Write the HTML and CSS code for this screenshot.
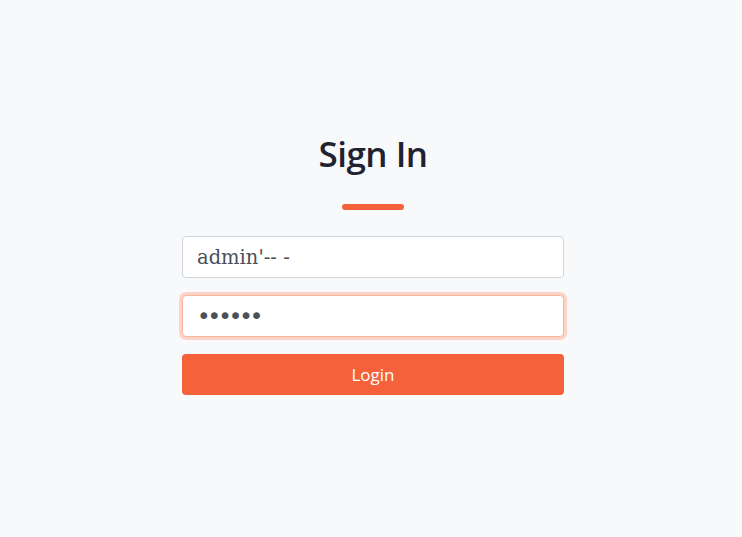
FILE: index.html
```html
<!DOCTYPE html>
<html lang="en">
<head>
<meta charset="utf-8">
<title>Sign In</title>
<link rel="stylesheet" href="styles.css">
</head>
<body>
<main class="page">
  <section class="card">
    <h1 class="title">Sign In</h1>
    <div class="underline"></div>
    <form class="form">
      <input class="field" type="text" value="admin'-- -">
      <input class="field field-focus" type="password" value="secret">
      <button class="btn" type="button">Login</button>
    </form>
  </section>
</main>
</body>
</html>
```
FILE: styles.css
```css
* { box-sizing: border-box; }
html, body { margin: 0; padding: 0; }
body {
  background: #f8f9fa;
  font-family: "Open Sans", "Noto Sans", sans-serif;
  color: #212529;
}
.page {
  min-height: 100vh;
  display: flex;
  align-items: center;
  justify-content: center;
}
.card {
  width: 382px;
  display: flex;
  flex-direction: column;
  align-items: center;
  margin-left: 4px;
}
.title {
  margin: 0;
  font-size: 35px;
  font-weight: 600;
  line-height: 23px;
  letter-spacing: -0.5px;
  color: #1f2330;
}
.underline {
  width: 62px;
  height: 6px;
  border-radius: 3px;
  background: #f5613a;
  margin: 39px 0 26px;
}
.form {
  width: 100%;
  display: flex;
  flex-direction: column;
  gap: 17px;
}
.field {
  width: 100%;
  height: 42px;
  padding: 0 14px;
  border: 1px solid #ced4da;
  border-radius: 4px;
  background: #fff;
  font-family: "DejaVu Serif", serif;
  font-size: 19.5px;
  color: #495057;
  outline: none;
}
.field-focus {
  border-color: #fab4a0;
  box-shadow: 0 0 0 3px #fcd3c7;
  font-family: "DejaVu Sans", sans-serif;
  font-size: 23px;
  letter-spacing: -3px;
}
.btn {
  height: 41px;
  border: none;
  border-radius: 4px;
  background: #f5613a;
  color: #fff;
  font-family: "Open Sans", "Noto Sans", sans-serif;
  font-size: 17px;
  font-weight: 500;
  cursor: pointer;
}
```
